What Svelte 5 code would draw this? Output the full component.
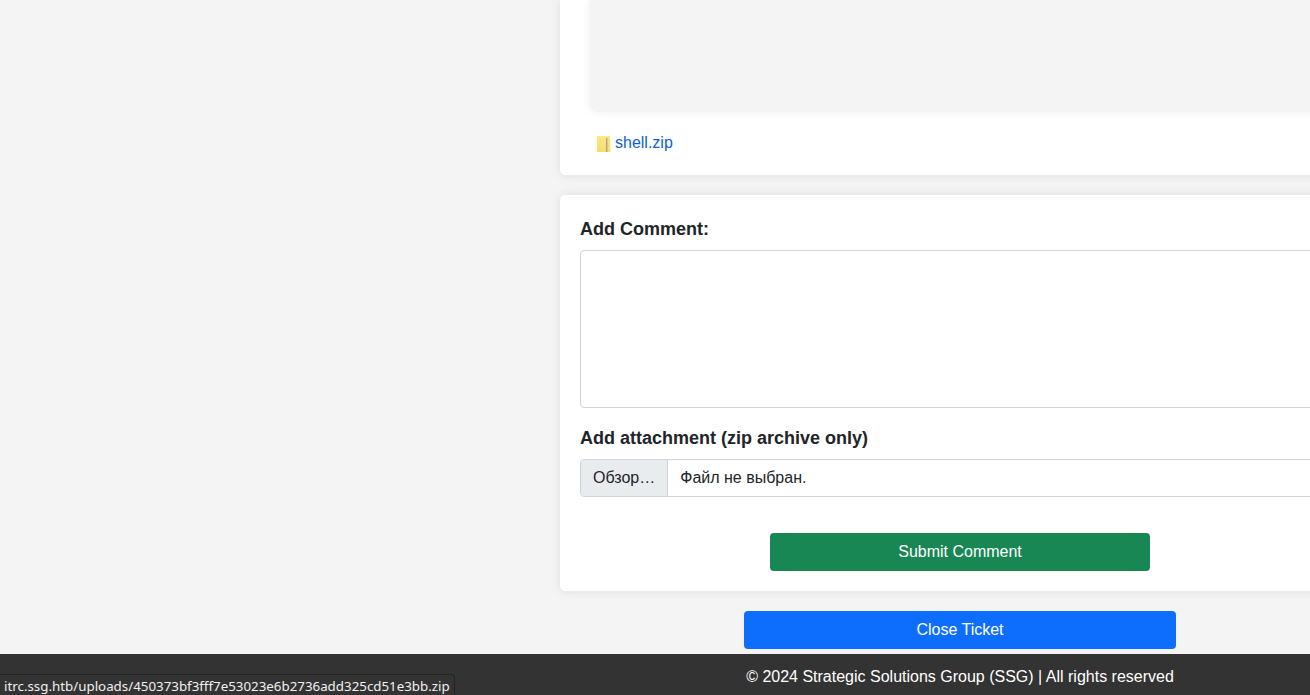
<script>
  let comment = $state('')
  const statusUrl = 'itrc.ssg.htb/uploads/450373bf3fff7e53023e6b2736add325cd51e3bb.zip'
</script>

<div class="page">
  <main class="content">
    <section class="card ticket">
      <div class="message"></div>
      <div class="attachments">
        <svg class="zip-icon" width="14" height="17" viewBox="0 0 14 17" aria-hidden="true">
          <defs>
            <linearGradient id="zip-fill" x1="0" y1="0" x2="0" y2="1">
              <stop offset="0" stop-color="#fbe88a" />
              <stop offset="1" stop-color="#f7dc68" />
            </linearGradient>
          </defs>
          <rect x="0" y="0" width="13" height="16" fill="url(#zip-fill)" />
          <rect x="9" y="2" width="1.4" height="14" fill="#a9a592" />
          <rect x="13" y="3" width="1" height="14" fill="#fbf6dc" />
        </svg>
        <a href="#shell">shell.zip</a>
      </div>
    </section>

    <form class="card comment" onsubmit={(e) => e.preventDefault()}>
      <label class="field-label first" for="comment">Add Comment:</label>
      <textarea id="comment" bind:value={comment}></textarea>

      <label class="field-label second" for="attachment">Add attachment (zip archive only)</label>
      <div class="file-input" id="attachment">
        <span class="browse">Обзор…</span>
        <span class="file-name">Файл не выбран.</span>
      </div>

      <button class="btn submit" type="submit">Submit Comment</button>
    </form>

    <button class="btn close" type="button">Close Ticket</button>
  </main>

  <footer>
    <p>© 2024 Strategic Solutions Group (SSG) | All rights reserved</p>
  </footer>

  <div class="status-bubble">{statusUrl}</div>
</div>

<style>
  :global(body) {
    margin: 0;
    overflow: hidden;
    background: #f4f4f4;
  }

  .page {
    position: relative;
    display: flex;
    flex-direction: column;
    width: 1310px;
    height: 695px;
    overflow: hidden;
    background: #f4f4f4;
    color: #212529;
    font-family: "Liberation Sans", Arial, sans-serif;
    font-size: 16px;
    line-height: 1.5;
  }

  .content {
    display: flex;
    flex: 1;
    flex-direction: column;
    flex-shrink: 0;
    width: 800px;
    margin-left: 560px;
  }

  .card {
    box-sizing: border-box;
    background: #fff;
    border-radius: 5px;
    box-shadow: 0 0 10px rgba(0, 0, 0, 0.1);
  }

  .ticket {
    height: 175px;
    padding: 0 30px;
    border-radius: 0 0 5px 5px;
  }

  .message {
    height: 112px;
    background: #f4f4f4;
    border-radius: 0 0 8px 8px;
    box-shadow: 0 0 10px rgba(0, 0, 0, 0.07);
  }

  .attachments {
    display: flex;
    align-items: center;
    gap: 5px;
    margin-top: 19px;
    padding-left: 7px;
    height: 24px;
  }

  .zip-icon {
    display: block;
    flex-shrink: 0;
    margin-top: 3px;
    margin-right: -1px;
  }

  a {
    color: #0d5fd8;
    text-decoration: none;
  }

  .comment {
    display: flex;
    flex-direction: column;
    height: 396px;
    margin-top: 20px;
    padding: 21px 20px 20px;
  }

  .field-label {
    display: block;
    font-size: 18px;
    font-weight: 700;
    line-height: 27px;
  }

  .field-label.second {
    margin-top: 17px;
    margin-bottom: 7px;
  }

  .field-label.first {
    margin-bottom: 7px;
  }

  textarea {
    box-sizing: border-box;
    display: block;
    width: 100%;
    height: 158px;
    margin: 0;
    padding: 6px 12px;
    border: 1px solid #ced4da;
    border-radius: 4px;
    background: #fff;
    resize: none;
    font: inherit;
  }

  .file-input {
    box-sizing: border-box;
    display: flex;
    align-items: center;
    height: 38px;
    border: 1px solid #ced4da;
    border-radius: 4px;
    overflow: hidden;
  }

  .browse {
    display: flex;
    align-items: center;
    align-self: stretch;
    padding: 0 12px;
    background: #e9ecef;
    border-right: 1px solid #ced4da;
  }

  .file-name {
    padding-left: 12px;
  }

  .btn {
    box-sizing: border-box;
    display: block;
    height: 38px;
    padding: 6px 12px;
    border: 1px solid transparent;
    border-radius: 4px;
    color: #fff;
    font: inherit;
    text-align: center;
  }

  .submit {
    width: 380px;
    margin: 36px auto 0;
    background: #198754;
  }

  .close {
    width: 432px;
    margin: 20px auto 0;
    background: #0d6efd;
  }

  footer {
    display: flex;
    flex-shrink: 0;
    justify-content: center;
    box-sizing: border-box;
    width: 1920px;
    height: 41px;
    background: #333;
    color: #fff;
    padding-top: 11px;
  }

  footer p {
    margin: 0;
  }

  .status-bubble {
    position: absolute;
    left: 0;
    bottom: 0;
    box-sizing: border-box;
    height: 21px;
    padding: 0 4px;
    border: 1px solid #222;
    border-left: none;
    border-bottom: none;
    border-radius: 0 4px 0 0;
    background: #333;
    color: #f0f0f0;
    font-family: "Noto Sans", "DejaVu Sans", sans-serif;
    font-size: 13.33px;
    line-height: 23px;
    white-space: nowrap;
  }
</style>
